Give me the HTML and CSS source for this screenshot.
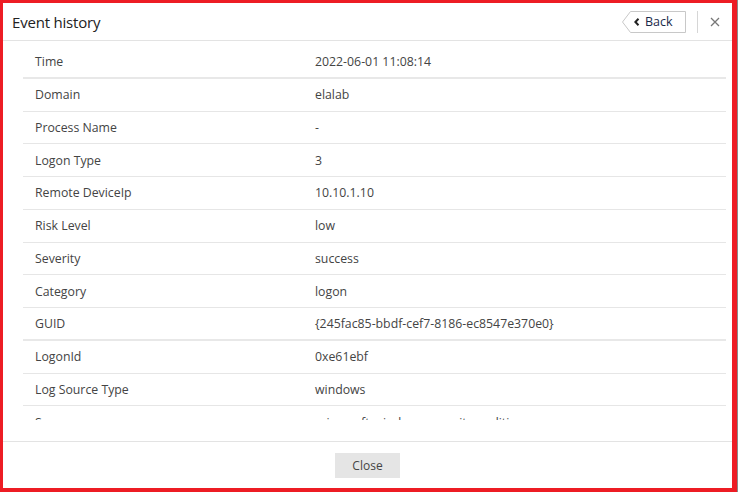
FILE: index.html
```html
<!DOCTYPE html>
<html>
<head>
<meta charset="utf-8">
<link rel="stylesheet" href="styles.css">
</head>
<body>
<div class="frame">
  <div class="modal">
    <div class="header">
      <div class="title">Event history</div>
      <div class="actions">
        <button class="back">
          <svg class="back-shape" width="64" height="22" viewBox="0 0 64 22"><polygon points="0.5,11 8.5,0.5 63.5,0.5 63.5,21.5 8.5,21.5" fill="#fff" stroke="#c8c8c8" stroke-width="1"/></svg>
          <span class="back-inner">
            <svg class="chev" width="6" height="8" viewBox="0 0 6 8"><path d="M4.5 0.8 L1.4 4 L4.5 7.2" fill="none" stroke="#222" stroke-width="2"/></svg>
            <span class="back-text">Back</span>
          </span>
        </button>
        <span class="divider"></span>
        <svg class="close-x" width="10" height="10" viewBox="0 0 10 10"><path d="M1 1 L9 9 M9 1 L1 9" stroke="#777" stroke-width="1.3"/></svg>
      </div>
    </div>
    <div class="body">
      <div class="scroll">
        <div class="row thick"><div class="k">Time</div><div class="v">2022-06-01 11:08:14</div></div>
        <div class="row"><div class="k">Domain</div><div class="v">elalab</div></div>
        <div class="row"><div class="k">Process Name</div><div class="v">-</div></div>
        <div class="row"><div class="k">Logon Type</div><div class="v">3</div></div>
        <div class="row"><div class="k">Remote DeviceIp</div><div class="v">10.10.1.10</div></div>
        <div class="row"><div class="k">Risk Level</div><div class="v">low</div></div>
        <div class="row"><div class="k">Severity</div><div class="v">success</div></div>
        <div class="row"><div class="k">Category</div><div class="v">logon</div></div>
        <div class="row thick"><div class="k">GUID</div><div class="v">{245fac85-bbdf-cef7-8186-ec8547e370e0}</div></div>
        <div class="row"><div class="k">LogonId</div><div class="v">0xe61ebf</div></div>
        <div class="row"><div class="k">Log Source Type</div><div class="v">windows</div></div>
        <div class="row"><div class="k">Source</div><div class="v">microsoft-windows-security-auditing</div></div>
      </div>
    </div>
    <div class="footer">
      <button class="close-btn">Close</button>
    </div>
  </div>
</div>
</body>
</html>
```
FILE: styles.css
```css
html, body {
  margin: 0;
  padding: 0;
  background: #fff;
}
body {
  font-family: "Open Sans", "Noto Sans", sans-serif;
  color: #444;
}
.frame {
  width: 738px;
  height: 492px;
  box-sizing: border-box;
  border-right: 1px solid #8a8a8a;
}
.modal {
  box-sizing: border-box;
  width: 737px;
  height: 492px;
  border-style: solid;
  border-color: #ed1c24;
  border-width: 3px 5px 4px 3px;
  display: flex;
  flex-direction: column;
  background: #fff;
}
.header {
  height: 37px;
  border-bottom: 1px solid #e3e3e3;
  display: flex;
  align-items: center;
  justify-content: space-between;
  padding-left: 9px;
  padding-right: 12px;
  flex: none;
}
.title {
  font-size: 15px;
  color: #222;
  letter-spacing: -0.2px;
}
.actions {
  display: flex;
  align-items: center;
}
.back {
  position: relative;
  width: 64px;
  height: 22px;
  padding: 0;
  margin: 0;
  border: none;
  background: transparent;
  font-family: inherit;
  cursor: pointer;
}
.back-shape {
  position: absolute;
  left: 0;
  top: 0;
}
.back-inner {
  position: relative;
  display: flex;
  align-items: center;
  height: 22px;
  padding-left: 12px;
}
.chev {
  display: block;
}
.back-text {
  font-size: 12.5px;
  color: #1a2a4a;
  margin-left: 5px;
}
.divider {
  width: 1px;
  height: 22px;
  background: #d6d6d6;
  margin-left: 11px;
  margin-right: 12px;
}
.close-x {
  display: block;
}
.body {
  flex: 1;
  min-height: 0;
  padding: 5px 6px 21px 20px;
  display: flex;
  flex-direction: column;
}
.scroll {
  flex: 1;
  overflow: hidden;
}
.row {
  display: flex;
  align-items: center;
  box-sizing: border-box;
  height: 32.75px;
  border-bottom: 1px solid #e6e6e6;
  font-size: 12.3px;
  color: #444;
}
.row.thick {
  border-bottom: 2px solid #e8e8e8;
}
.k {
  width: 292px;
  padding-left: 12px;
  box-sizing: border-box;
  flex: none;
}
.v {
  flex: 1;
}
.footer {
  flex: none;
  height: 46px;
  border-top: 1px solid #e3e3e3;
  display: flex;
  align-items: center;
  justify-content: center;
}
.close-btn {
  width: 65px;
  height: 25px;
  border: none;
  background: #e5e5e5;
  font-family: inherit;
  font-size: 12px;
  color: #444;
  padding: 0;
}
```
